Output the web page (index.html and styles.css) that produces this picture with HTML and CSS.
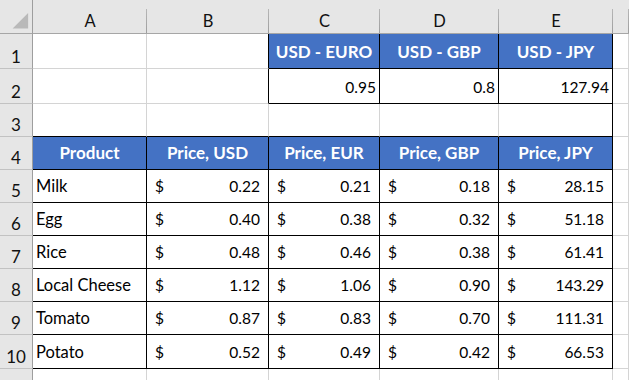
FILE: index.html
```html
<!DOCTYPE html>
<html>
<head>
<meta charset="utf-8">
<link rel="stylesheet" href="styles.css">
</head>
<body>
<div class="sheet">
  <div class="hd corner"><svg width="33" height="33" viewBox="0 0 33 33"><polygon points="13,29 29,29 29,13" fill="#b9b9b9"/></svg></div>
  <div class="hd col">A</div>
  <div class="hd col">B</div>
  <div class="hd col">C</div>
  <div class="hd col">D</div>
  <div class="hd col">E</div>
  <div class="hd col last"></div>

  <div class="hd row">1</div>
  <div class="c"></div>
  <div class="c br"></div>
  <div class="c bk blue">USD - EURO</div>
  <div class="c bk blue">USD - GBP</div>
  <div class="c bk blue">USD - JPY</div>
  <div class="c"></div>

  <div class="hd row">2</div>
  <div class="c"></div>
  <div class="c br"></div>
  <div class="c bk num">0.95</div>
  <div class="c bk num">0.8</div>
  <div class="c bk num">127.94</div>
  <div class="c"></div>

  <div class="hd row">3</div>
  <div class="c bb"></div>
  <div class="c bb"></div>
  <div class="c bb"></div>
  <div class="c bb"></div>
  <div class="c bb br"></div>
  <div class="c"></div>

  <div class="hd row">4</div>
  <div class="c bk blue">Product</div>
  <div class="c bk blue">Price, USD</div>
  <div class="c bk blue">Price, EUR</div>
  <div class="c bk blue">Price, GBP</div>
  <div class="c bk blue">Price, JPY</div>
  <div class="c"></div>

  <div class="hd row">5</div>
  <div class="c bk txt">Milk</div>
  <div class="c bk acc"><span>$</span><span>0.22</span></div>
  <div class="c bk acc"><span>$</span><span>0.21</span></div>
  <div class="c bk acc"><span>$</span><span>0.18</span></div>
  <div class="c bk acc"><span>$</span><span>28.15</span></div>
  <div class="c"></div>

  <div class="hd row">6</div>
  <div class="c bk txt">Egg</div>
  <div class="c bk acc"><span>$</span><span>0.40</span></div>
  <div class="c bk acc"><span>$</span><span>0.38</span></div>
  <div class="c bk acc"><span>$</span><span>0.32</span></div>
  <div class="c bk acc"><span>$</span><span>51.18</span></div>
  <div class="c"></div>

  <div class="hd row">7</div>
  <div class="c bk txt">Rice</div>
  <div class="c bk acc"><span>$</span><span>0.48</span></div>
  <div class="c bk acc"><span>$</span><span>0.46</span></div>
  <div class="c bk acc"><span>$</span><span>0.38</span></div>
  <div class="c bk acc"><span>$</span><span>61.41</span></div>
  <div class="c"></div>

  <div class="hd row">8</div>
  <div class="c bk txt">Local Cheese</div>
  <div class="c bk acc"><span>$</span><span>1.12</span></div>
  <div class="c bk acc"><span>$</span><span>1.06</span></div>
  <div class="c bk acc"><span>$</span><span>0.90</span></div>
  <div class="c bk acc"><span>$</span><span>143.29</span></div>
  <div class="c"></div>

  <div class="hd row">9</div>
  <div class="c bk txt">Tomato</div>
  <div class="c bk acc"><span>$</span><span>0.87</span></div>
  <div class="c bk acc"><span>$</span><span>0.83</span></div>
  <div class="c bk acc"><span>$</span><span>0.70</span></div>
  <div class="c bk acc"><span>$</span><span>111.31</span></div>
  <div class="c"></div>

  <div class="hd row">10</div>
  <div class="c bk txt">Potato</div>
  <div class="c bk acc"><span>$</span><span>0.52</span></div>
  <div class="c bk acc"><span>$</span><span>0.49</span></div>
  <div class="c bk acc"><span>$</span><span>0.42</span></div>
  <div class="c bk acc"><span>$</span><span>66.53</span></div>
  <div class="c"></div>

  <div class="hd row"></div>
  <div class="c"></div>
  <div class="c"></div>
  <div class="c"></div>
  <div class="c"></div>
  <div class="c"></div>
  <div class="c"></div>
</div>
</body>
</html>
```

FILE: styles.css
```css
html, body {
  margin: 0;
  padding: 0;
  background: #ffffff;
}
body {
  width: 629px;
  height: 380px;
  overflow: hidden;
  font-family: Lato, "Liberation Sans", sans-serif;
  font-size: 15.5px;
  color: #000;
}
.sheet {
  display: grid;
  grid-template-columns: 33px 114px 122px 111px 119px 114px 1fr;
  grid-template-rows: 34px 35px 35px 33px 33px 33px 33px 33px 33px 33px 34px 20px;
  width: 629px;
  height: 380px;
}
.sheet > div {
  box-sizing: border-box;
  border-right: 1px solid #d4d4d4;
  border-bottom: 1px solid #d4d4d4;
  display: flex;
  align-items: flex-end;
  line-height: 18px;
  white-space: nowrap;
  overflow: hidden;
}
.hd {
  background-color: #e6e6e6;
  font-size: 16.5px;
  color: #111;
}
.hd.col {
  justify-content: center;
  padding-bottom: 3px;
  border-right: 0;
  border-bottom: 1px solid #a6a6a6;
  background: linear-gradient(#b6b6b6, #9e9e9e) right bottom / 1px 24px no-repeat, #e6e6e6;
}
.hd.corner {
  border-right: 1px solid #9e9e9e;
  border-bottom: 1px solid #a6a6a6;
  align-items: stretch;
}
.hd.row {
  justify-content: center;
  padding-bottom: 2px;
  font-size: 17px;
  border-right: 1px solid #9e9e9e;
  border-bottom: 1px solid #c2c2c2;
}
.sheet > .bk {
  border-right-color: #000;
  border-bottom-color: #000;
}
.sheet > .br {
  border-right-color: #000;
}
.sheet > .bb {
  border-bottom-color: #000;
}
.blue {
  background: #4472c4;
  color: #fff;
  font-weight: 700;
  font-size: 17px;
  justify-content: center;
  padding-bottom: 7px;
}
.num {
  justify-content: flex-end;
  padding: 0 3px 7px 0;
}
.txt {
  font-size: 16.5px;
  padding: 0 0 7px 3px;
}
.acc {
  justify-content: space-between;
  padding: 0 8px 7px 8px;
}
```
